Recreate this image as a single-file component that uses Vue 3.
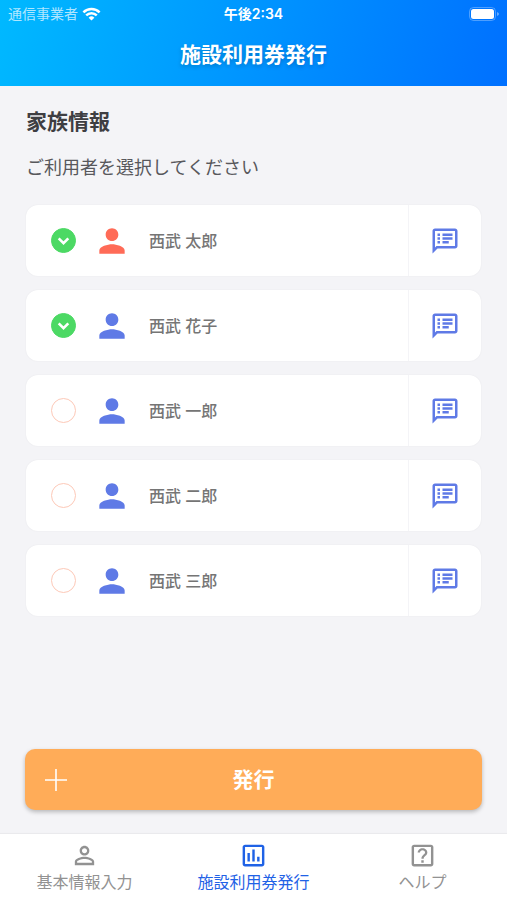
<template>
  <div class="screen">
    <header class="header">
      <div class="status-bar">
        <div class="carrier">
          <span>通信事業者</span>
          <svg class="wifi" viewBox="0 0 19 14" aria-hidden="true">
            <path d="M1.4 5.3a11.6 11.6 0 0 1 16.2 0" />
            <path d="M4.2 8.3a7.6 7.6 0 0 1 10.6 0" />
            <path class="wifi-dot" d="M9.5 13.6L6.6 10.7a4.2 4.2 0 0 1 5.8 0z" />
          </svg>
        </div>
        <time class="clock">午後2:34</time>
        <svg class="battery" viewBox="0 0 30 14" aria-hidden="true">
          <rect class="battery-frame" x="0.5" y="0.5" width="26" height="13" rx="4" />
          <rect class="battery-level" x="2" y="2" width="23" height="10" rx="2.5" />
          <path class="battery-tip" d="M28 5c1.4.5 2 1.2 2 2s-.6 1.5-2 2z" />
        </svg>
      </div>
      <h1 class="title">施設利用券発行</h1>
    </header>

    <main class="content">
      <h2 class="heading">家族情報</h2>
      <p class="lead">ご利用者を選択してください</p>

      <ul class="members">
        <li v-for="member in members" :key="member.id" class="card">
          <label class="member">
            <span class="check">
              <input v-model="member.selected" type="checkbox" class="check-input" />
              <svg v-if="member.selected" class="check-mark" viewBox="0 0 25 25" aria-hidden="true">
                <path d="M7.7 10.3l4.8 4.8 4.8-4.8" />
              </svg>
            </span>
            <svg class="person" :class="{ owner: member.owner }" viewBox="0 0 24 24" aria-hidden="true">
              <path d="M12 12c2.21 0 4-1.79 4-4s-1.79-4-4-4-4 1.79-4 4 1.79 4 4 4zm0 2c-2.67 0-8 1.34-8 4v2h16v-2c0-2.66-5.33-4-8-4z" />
            </svg>
            <span class="name">{{ member.name }}</span>
          </label>
          <button type="button" class="note-btn" :aria-label="member.name + 'の詳細'">
            <svg class="note" viewBox="0 0 24 24" aria-hidden="true">
              <path d="M20 2H4c-1.1 0-1.99.9-1.99 2L2 22l4-4h14c1.1 0 2-.9 2-2V4c0-1.1-.9-2-2-2zm0 14H5.17L4 17.17V4h16v12zM6 12h2v2H6zm0-3h2v2H6zm0-3h2v2H6zm4 6h5v2h-5zm0-3h8v2h-8zm0-3h8v2h-8z" />
            </svg>
          </button>
        </li>
      </ul>

      <button type="button" class="issue-btn">
        <svg class="plus" viewBox="0 0 22 22" aria-hidden="true">
          <path d="M11 0v22M0 11h22" />
        </svg>
        <span>発行</span>
      </button>
    </main>

    <nav class="tabs">
      <a
        v-for="tab in tabs"
        :key="tab.id"
        href="#"
        class="tab"
        :class="{ active: currentTab === tab.id }"
        @click.prevent="currentTab = tab.id"
      >
        <svg class="tab-icon" viewBox="0 0 24 24" aria-hidden="true">
          <path :d="tab.icon" />
        </svg>
        <span>{{ tab.label }}</span>
      </a>
    </nav>
  </div>
</template>

<script setup>
import { ref } from 'vue'

const currentTab = ref('issue')

const members = ref([
  { id: 1, name: '西武 太郎', selected: true, owner: true },
  { id: 2, name: '西武 花子', selected: true, owner: false },
  { id: 3, name: '西武 一郎', selected: false, owner: false },
  { id: 4, name: '西武 二郎', selected: false, owner: false },
  { id: 5, name: '西武 三郎', selected: false, owner: false }
])

const tabs = [
  {
    id: 'profile',
    label: '基本情報入力',
    icon: 'M12 5.9c1.16 0 2.1.94 2.1 2.1s-.94 2.1-2.1 2.1S9.9 9.16 9.9 8s.94-2.1 2.1-2.1m0 9c2.97 0 6.1 1.46 6.1 2.1v1.1H5.9V17c0-.64 3.13-2.1 6.1-2.1M12 4C9.79 4 8 5.79 8 8s1.79 4 4 4 4-1.79 4-4-1.79-4-4-4zm0 9c-2.67 0-8 1.34-8 4v3h16v-3c0-2.66-5.33-4-8-4z'
  },
  {
    id: 'issue',
    label: '施設利用券発行',
    icon: 'M19 3H5c-1.1 0-2 .9-2 2v14c0 1.1.9 2 2 2h14c1.1 0 2-.9 2-2V5c0-1.1-.9-2-2-2zm0 16H5V5h14v14zM7 10h2v7H7zm4-3h2v10h-2zm4 6h2v4h-2z'
  },
  {
    id: 'help',
    label: 'ヘルプ',
    icon: 'M19 3H5c-1.1 0-2 .9-2 2v14c0 1.1.9 2 2 2h14c1.1 0 2-.9 2-2V5c0-1.1-.9-2-2-2zm0 16H5V5h14v14zM11 16h2v2h-2zM12 6c-2.2 0-4 1.6-4 3.6h1.9c0-1.1.9-1.9 2.1-1.9s2.1.8 2.1 1.8c0 1.7-3 2-3 5.2H13c0-2.3 3-2.6 3-5.2C16 7.5 14.2 6 12 6z'
  }
]
</script>

<style>
body {
  margin: 0;
}
</style>

<style scoped>
.screen {
  min-height: 100vh;
  display: flex;
  flex-direction: column;
  background: #f4f4f7;
  color: #3e3e42;
  font-family: Inter, "Noto Sans CJK JP", sans-serif;
}

button {
  font-family: inherit;
  border: none;
  padding: 0;
  cursor: pointer;
}

.header {
  background: linear-gradient(105deg, #00b9ff, #0070ff);
  color: white;
  padding-bottom: 16px;
}

.status-bar {
  display: grid;
  grid-template-columns: 1fr auto 1fr;
  align-items: center;
  height: 28px;
  padding: 0 8px;
}

.carrier {
  display: flex;
  align-items: center;
  gap: 4px;
  font-size: 14px;
  line-height: 20px;
  color: rgba(255, 255, 255, 0.7);
}

.wifi {
  width: 19px;
  height: 14px;
  fill: none;
  stroke: white;
  stroke-width: 2.5;
}

.wifi-dot {
  fill: white;
  stroke: none;
}

.clock {
  font-size: 14px;
  line-height: 20px;
  font-weight: 600;
}

.battery {
  width: 30px;
  height: 14px;
  justify-self: end;
}

.battery-frame {
  fill: none;
  stroke: rgba(255, 255, 255, 0.3);
}

.battery-level {
  fill: white;
}

.battery-tip {
  fill: rgba(255, 255, 255, 0.4);
}

.title {
  margin: 12px 0 0;
  font-size: 21px;
  line-height: 30px;
  font-weight: 600;
  text-align: center;
  text-shadow: 0 2px 4px rgba(0, 0, 0, 0.2);
}

.content {
  flex: 1;
  display: flex;
  flex-direction: column;
  padding: 21px 25px 24px;
}

.heading {
  margin: 0 1px;
  font-size: 21px;
  line-height: 30px;
  font-weight: 600;
}

.lead {
  margin: 16px 1px 22px;
  font-size: 18px;
  line-height: 30px;
  color: #58585c;
}

.members {
  display: flex;
  flex-direction: column;
  gap: 14px;
  margin: 0 1px 24px;
  padding: 0;
  list-style: none;
}

.card {
  display: flex;
  height: 71px;
  background: white;
  border-radius: 12px;
  box-shadow: 0 0 2px rgba(0, 0, 0, 0.06);
}

.member {
  flex: 1;
  display: flex;
  align-items: center;
  padding-left: 25px;
  cursor: pointer;
}

.check {
  display: grid;
}

.check-input,
.check-mark {
  grid-area: 1 / 1;
  width: 25px;
  height: 25px;
}

.check-input {
  appearance: none;
  box-sizing: border-box;
  margin: 0;
  border: 1px solid #fdc9b8;
  border-radius: 50%;
  background: white;
}

.check-input:checked {
  border-color: #4cd964;
  background: #4cd964;
}

.check-mark {
  fill: none;
  stroke: white;
  stroke-width: 2.6;
  pointer-events: none;
}

.person {
  width: 38px;
  height: 38px;
  margin: 0 18px 0 17px;
  fill: #5f7ae6;
}

.person.owner {
  fill: #ff6b57;
}

.name {
  font-size: 16px;
  line-height: 24px;
  font-weight: 500;
  color: #757575;
}

.note-btn {
  display: flex;
  align-items: center;
  justify-content: center;
  width: 73px;
  background: none;
  border-left: 1px solid #f4f4f7;
}

.note {
  width: 30px;
  height: 30px;
  fill: #5f7ae6;
}

.issue-btn {
  display: grid;
  grid-template-columns: 1fr auto 1fr;
  align-items: center;
  height: 61px;
  margin-top: auto;
  padding: 0 20px;
  border-radius: 10px;
  background: #ffac58;
  color: white;
  font-size: 21px;
  line-height: 30px;
  font-weight: 600;
  box-shadow: 0 2px 4px rgba(0, 0, 0, 0.25);
}

.plus {
  width: 22px;
  height: 22px;
  stroke: white;
  stroke-width: 1.6;
}

.tabs {
  display: grid;
  grid-template-columns: repeat(3, 1fr);
  background: white;
  box-shadow: 0 -1px 1px rgba(0, 0, 0, 0.04);
}

.tab {
  display: flex;
  flex-direction: column;
  align-items: center;
  padding: 7px 0 6px;
  font-size: 16px;
  line-height: 24px;
  color: #929292;
  text-decoration: none;
}

.tab.active {
  color: #1f62e6;
}

.tab-icon {
  width: 29px;
  height: 29px;
  fill: currentColor;
}
</style>
